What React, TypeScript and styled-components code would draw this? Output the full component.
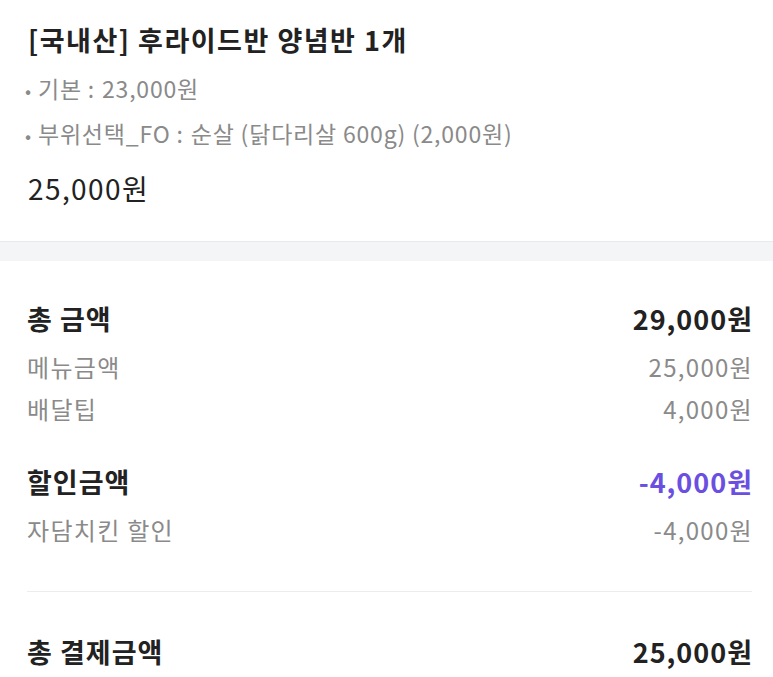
import styled, { createGlobalStyle } from 'styled-components';

const GlobalStyle = createGlobalStyle`
  body {
    margin: 0;
    background: #ffffff;
    font-family: 'Noto Sans CJK KR', 'Noto Sans', sans-serif;
    color: #222222;
  }
`;

const options = [
  { label: '기본', value: '23,000원' },
  { label: '부위선택_FO', value: '순살 (닭다리살 600g) (2,000원)' },
];

const groups = [
  {
    title: '총 금액',
    total: '29,000원',
    accent: false,
    items: [
      { name: '메뉴금액', price: '25,000원' },
      { name: '배달팁', price: '4,000원' },
    ],
  },
  {
    title: '할인금액',
    total: '-4,000원',
    accent: true,
    items: [{ name: '자담치킨 할인', price: '-4,000원' }],
  },
];

const App = () => {
  return (
    <S.Wrap>
      <GlobalStyle />
      <S.MenuSection>
        <S.MenuTitle>[국내산] 후라이드반 양념반 1개</S.MenuTitle>
        <S.OptionList>
          {options.map((option) => (
            <S.Option key={option.label}>
              <span className="dot">•</span>
              {option.label}
              <span className="colon">:</span>
              {option.value}
            </S.Option>
          ))}
        </S.OptionList>
        <S.MenuPrice>25,000원</S.MenuPrice>
      </S.MenuSection>

      <S.Band />

      <S.Summary>
        {groups.map((group) => (
          <S.Group key={group.title}>
            <S.HeadRow $accent={group.accent}>
              <span>{group.title}</span>
              <span className="amount">{group.total}</span>
            </S.HeadRow>
            <S.DetailList>
              {group.items.map((item) => (
                <S.DetailRow key={item.name}>
                  <span>{item.name}</span>
                  <span className="amount">{item.price}</span>
                </S.DetailRow>
              ))}
            </S.DetailList>
          </S.Group>
        ))}
        <S.Divider />
        <S.HeadRow>
          <span>총 결제금액</span>
          <span className="amount">25,000원</span>
        </S.HeadRow>
      </S.Summary>
    </S.Wrap>
  );
};

interface RowProps {
  $accent?: boolean;
}

const S = {
  Wrap: styled.div`
    width: 100%;
    display: flex;
    flex-direction: column;
  `,

  MenuSection: styled.section`
    padding: 21px 21px 34px 28px;
    display: flex;
    flex-direction: column;
  `,

  MenuTitle: styled.div`
    font-size: 27px;
    font-weight: 700;
    line-height: 38px;
    letter-spacing: 1.5px;
    color: #222222;
  `,

  OptionList: styled.ul`
    list-style: none;
    margin: 8px 0 0;
    padding: 0;
  `,

  Option: styled.li`
    margin-left: -3px;
    font-size: 23px;
    line-height: 43px;
    letter-spacing: 0.8px;
    color: #8a8a8a;

    & .dot {
      margin-right: 6px;
      font-size: 18px;
    }

    & .colon {
      margin: 0 7px 0 6px;
    }
  `,

  MenuPrice: styled.div`
    margin-top: 12px;
    font-size: 28px;
    line-height: 38px;
    letter-spacing: 1.4px;
    color: #222222;
  `,

  Band: styled.div`
    height: 19px;
    background-color: #f4f5f7;
    border-top: 1px solid #e9eaec;
  `,

  Summary: styled.section`
    padding: 39px 21px 40px 27px;
    display: flex;
    flex-direction: column;
  `,

  Group: styled.div`
    display: flex;
    flex-direction: column;

    & + & {
      margin-top: 33px;
    }
  `,

  HeadRow: styled.div<RowProps>`
    display: flex;
    justify-content: space-between;
    align-items: center;
    font-size: 27px;
    font-weight: 700;
    line-height: 38px;
    letter-spacing: 1px;
    color: #222222;

    & .amount {
      margin-right: -1px;
      color: ${({ $accent }) => ($accent ? '#6a4fe0' : '#222222')};
    }
  `,

  DetailList: styled.div`
    margin-top: 8px;
    display: flex;
    flex-direction: column;
  `,

  DetailRow: styled.div`
    display: flex;
    justify-content: space-between;
    align-items: center;
    font-size: 24px;
    line-height: 42px;
    letter-spacing: 1.3px;
    color: #8a8a8a;

    & .amount {
      margin-right: -1px;
    }
  `,

  Divider: styled.hr`
    margin: 40px 0 41px;
    border: none;
    border-top: 1px solid #ededed;
    height: 0;
  `,
};

export default App;
